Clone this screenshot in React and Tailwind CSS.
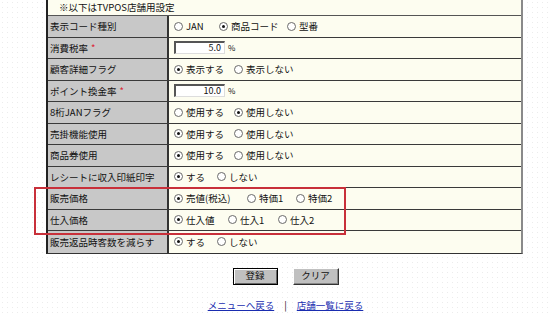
import React from 'react';

const font = { fontFamily: '"Noto Sans CJK JP", "Noto Sans", sans-serif' };

const Radio = ({ checked, label, w }) => (
    <span className={`inline-flex items-center gap-[3px] ${w || ''}`}>
        <span className="relative inline-block w-[9px] h-[9px] rounded-full border border-[#6a6a6a] bg-white shrink-0">
            {checked && <span className="absolute left-[2px] top-[2px] w-[3px] h-[3px] rounded-full bg-[#111]" />}
        </span>
        <span>{label}</span>
    </span>
);

const NumInput = ({ value }) => (
    <span className="inline-flex items-center gap-[3px]">
        <span className="inline-block w-[51px] h-[13px] bg-white border-t-2 border-l-2 border-[#555] border-b border-r border-b-[#ddd] border-r-[#ddd] text-right pr-[3px] leading-[10px] text-[9px]">
            {value}
        </span>
        <span className="text-[8px]">%</span>
    </span>
);

const rows = [
    { label: '表示コード種別', opts: [['JAN', false, 'w-[45px]'], ['商品コード', true, 'w-[68px]'], ['型番', false]] },
    { label: '消費税率', req: true, input: '5.0' },
    { label: '顧客詳細フラグ', opts: [['表示する', true, 'w-[60px]'], ['表示しない', false]] },
    { label: 'ポイント換金率', req: true, input: '10.0' },
    { label: '8桁JANフラグ', opts: [['使用する', false, 'w-[60px]'], ['使用しない', true]] },
    { label: '売掛機能使用', opts: [['使用する', true, 'w-[60px]'], ['使用しない', false]] },
    { label: '商品券使用', opts: [['使用する', true, 'w-[60px]'], ['使用しない', false]] },
    { label: 'レシートに収入印紙印字', opts: [['する', true, 'w-[43px]'], ['しない', false]] },
    { label: '販売価格', opts: [['売値(税込)', true, 'w-[73px]'], ['特価1', false, 'w-[49px]'], ['特価2', false]] },
    { label: '仕入価格', opts: [['仕入値', true, 'w-[54px]'], ['仕入1', false, 'w-[50px]'], ['仕入2', false]] },
    { label: '販売返品時客数を減らす', opts: [['する', true, 'w-[43px]'], ['しない', false]] },
];

const App = () => {
    return (
        <div
            className="relative w-[550px] h-[317px] overflow-hidden bg-white bg-[radial-gradient(#ececec_0.8px,transparent_0.8px)] bg-[size:5px_5px] text-[9.5px] text-[#111]"
            style={font}
        >
            {/* Settings table */}
            <div className="ml-[46px] w-[477px] border-l-2 border-l-[#222] border-r-2 border-r-[#8a8a8a] border-b border-b-[#333]">
                <div className="h-[16px] bg-[#fdfdf0] border-b border-[#555] flex items-center pl-[11px]">
                    ※以下はTVPOS店舗用設定
                </div>
                {rows.map((r) => (
                    <div key={r.label} className="grid grid-cols-[121px_1fr] h-[21.5px] border-b border-[#3a3a3a] last:border-b-0">
                        <div className="bg-[#c8c8c8] border-r-2 border-[#333] flex items-center pl-[2px]">
                            {r.label}
                            {r.req && <span className="text-[#d23] ml-[3px]">*</span>}
                        </div>
                        <div className="bg-[#fdfdf0] flex items-center pl-[5px]">
                            {r.input ? (
                                <NumInput value={r.input} />
                            ) : (
                                r.opts.map(([t, c, w]) => <Radio key={t} label={t} checked={c} w={w} />)
                            )}
                        </div>
                    </div>
                ))}
            </div>

            {/* Buttons */}
            <div className="flex justify-center gap-[15px] mt-[14px] pl-[21px]">
                <button className="w-[45px] h-[17px] bg-[#c0c0c0] border border-black shadow-[inset_1px_1px_0_#fff,inset_-1px_-1px_0_#666] text-[9.5px] leading-none">
                    登録
                </button>
                <button className="w-[46px] h-[17px] bg-[#c0c0c0] border border-t-white border-l-white border-b-[#333] border-r-[#333] shadow-[inset_-1px_-1px_0_#888] text-[9.5px] leading-none">
                    クリア
                </button>
            </div>

            {/* Links */}
            <div className="flex justify-center items-center gap-[10px] mt-[13px] pl-[21px] text-[9.5px]">
                <a href="#" className="text-[#1a2db0] underline">メニューへ戻る</a>
                <span>|</span>
                <a href="#" className="text-[#1a2db0] underline">店舗一覧に戻る</a>
            </div>

            {/* Highlight box */}
            <div className="absolute left-[34px] top-[187px] w-[312px] h-[48px] border-2 border-[#c8303a]" />
        </div>
    );
};

export default App;
